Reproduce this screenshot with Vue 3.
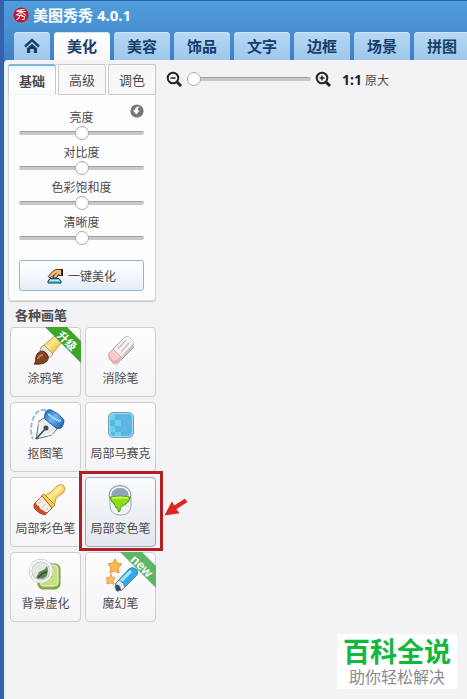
<script setup>
import { ref, reactive } from 'vue'

const tabs = ['美化', '美容', '饰品', '文字', '边框', '场景', '拼图']
const activeTab = ref('美化')

const modes = ['基础', '高级', '调色']
const activeMode = ref('基础')

const sliders = reactive([
  { id: 'brightness', label: '亮度', value: 50 },
  { id: 'contrast', label: '对比度', value: 50 },
  { id: 'saturation', label: '色彩饱和度', value: 50 },
  { id: 'clarity', label: '清晰度', value: 50 },
])

const zoom = ref(0)

const tools = [
  { id: 'paint', label: '涂鸦笔', ribbon: '升级' },
  { id: 'eraser', label: '消除笔' },
  { id: 'cutout', label: '抠图笔' },
  { id: 'mosaic', label: '局部马赛克' },
  { id: 'color', label: '局部彩色笔' },
  { id: 'recolor', label: '局部变色笔', marked: true },
  { id: 'blur', label: '背景虚化' },
  { id: 'magic', label: '魔幻笔', ribbon: 'new' },
]

const resetSliders = () => {
  sliders.forEach((s) => { s.value = 50 })
}
</script>

<template>
  <div class="window">
    <header class="header">
      <div class="title">
        <svg class="logo" viewBox="0 0 16 16" aria-hidden="true">
          <circle cx="8" cy="8" r="7.6" fill="#c5162f" />
          <text x="8" y="12" text-anchor="middle" font-size="11" fill="#fff">秀</text>
        </svg>
        <h1>美图秀秀 4.0.1</h1>
      </div>
      <nav class="tabs">
        <button class="tab home" type="button" aria-label="首页">
          <svg width="16" height="16" viewBox="0 0 16 16" aria-hidden="true">
            <path d="M1 8.5 8 2.2 15 8.5" fill="none" stroke="#173d6d" stroke-width="2.4" />
            <path d="M3 10.2 8 5.8l5 4.4V15H9.8v-4H6.2v4H3z" fill="#173d6d" />
          </svg>
        </button>
        <button
          v-for="tab in tabs"
          :key="tab"
          class="tab"
          :class="{ active: tab === activeTab }"
          type="button"
          @click="activeTab = tab"
        >{{ tab }}</button>
      </nav>
    </header>

    <main class="content">
      <aside class="sidebar">
        <section class="panel">
          <div class="modes">
            <button
              v-for="mode in modes"
              :key="mode"
              class="mode"
              :class="{ active: mode === activeMode }"
              type="button"
              @click="activeMode = mode"
            >{{ mode }}</button>
          </div>
          <div class="adjust">
            <button class="reset" type="button" aria-label="还原" @click="resetSliders">
              <svg width="14" height="14" viewBox="0 0 14 14" aria-hidden="true">
                <circle cx="7" cy="7" r="6.6" fill="#777679" />
                <path d="M9.9 2.6Q5.200 2.200 4.800 6.300H2.900l3.400 4.300 3.300-4.300H7.600Q7.400 4 9.900 2.600z" fill="#fff" />
              </svg>
            </button>
            <div v-for="s in sliders" :key="s.id" class="slider">
              <label :for="s.id">{{ s.label }}</label>
              <input :id="s.id" v-model="s.value" class="range" type="range" min="0" max="100">
            </div>
            <button class="auto" type="button">
              <svg width="16" height="16" viewBox="0 0 16 16" aria-hidden="true">
                <path d="M1 15v-2l2-2.5h9l2 2.5v2z" fill="#55bfe4" stroke="#173c50" />
                <path d="M3 12.3h9" stroke="#d7f6ff" />
                <path d="M1.2 8.5 6 3.2 9 1.5h6v6h-3.5L9.5 9.8H5.8L7 7.2 3 9.8z" fill="#efbd7d" stroke="#5c3b1b" />
                <path d="M7 7.2 9.5 5M9.5 9.5 12 6" stroke="#5c3b1b" fill="none" />
                <path d="M14 1h2v7h-2z" fill="#262320" />
              </svg>
              <span>一键美化</span>
            </button>
          </div>
        </section>

        <h2>各种画笔</h2>
        <div class="tools">
          <div v-for="tool in tools" :key="tool.id" class="cell">
            <button class="tool" :class="{ marked: tool.marked }" type="button">
              <svg class="icon" viewBox="0 0 40 36" aria-hidden="true">
                <defs>
                  <linearGradient :id="`gold-${tool.id}`" x1="0" y1="0" x2="1" y2="1">
                    <stop offset="0" stop-color="#e0a52c" />
                    <stop offset=".45" stop-color="#ffe98e" />
                    <stop offset="1" stop-color="#dd951a" />
                  </linearGradient>
                  <linearGradient :id="`blue-${tool.id}`" x1="0" y1="0" x2="1" y2="1">
                    <stop offset="0" stop-color="#1a62b0" />
                    <stop offset=".45" stop-color="#67b9f5" />
                    <stop offset="1" stop-color="#174f9f" />
                  </linearGradient>
                </defs>

                <g v-if="tool.id === 'paint'" stroke-linejoin="round">
                  <path d="M17 15 31 3q4-2 6 0 3 3 0 7L26 23z" :fill="`url(#gold-${tool.id})`" stroke="#cf9c35" />
                  <path d="M14 19q0-3 4-5l9 9q-2 4-6 4z" fill="#eeeae3" stroke="#a7967e" />
                  <path d="M8 33c3-2 0-7 4-11q4-4 8 0 4 4 1 8-4 4-13 3z" fill="#824225" stroke="#5e2c18" />
                  <path d="M12 28q1-4 5-4" fill="none" stroke="#c27d54" stroke-width="2" />
                </g>

                <g v-else-if="tool.id === 'eraser'" stroke-linejoin="round">
                  <path d="M8 22 24 6q2-1 4 0l4 4q1 2 0 4v3L17 32q-2 2-5 0l-4-5z" fill="#c8c6c7" stroke="#a3a1a2" />
                  <path d="m12 19 12-13q2-1 4 0l5 5q0 1-1 2L20 26z" fill="#f4f3f3" />
                  <path d="m17 18 8-9m-5 12 8-9m-5 12 6-7" stroke="#c6c6c6" stroke-width="1.5" />
                  <path d="m8 22 4-4 8 8-5 4q-1 1-3 0l-4-5z" fill="#f9cbc9" stroke="#dfa3a2" />
                  <path d="m8 25 5 6q2 1 7-4v2l-4 4q-2 1-4-1l-4-4z" fill="#eeb0b0" />
                </g>

                <g v-else-if="tool.id === 'cutout'" stroke-linejoin="round">
                  <path d="M20 4Q10 3 7 13q-4 12 0 20" fill="none" stroke="#9abdda" stroke-width="2" stroke-dasharray="5 2" />
                  <path d="m13 15 8-5 10 13-5 6-16 4z" fill="#e8edf0" stroke="#6a747c" />
                  <path d="m10 33 10-11" stroke="#394650" stroke-width="1.5" />
                  <circle cx="20" cy="22" r="2.5" fill="#404950" />
                  <path d="m14 27-1-11m2 14 12-2" stroke="#fff" />
                  <path d="M19 8q1-5 6-4 9 4 13 10 0 4-2 7-2 3-6 1L19 13q-1-2 0-5z" :fill="`url(#blue-${tool.id})`" stroke="#2558a3" />
                  <path d="M22 8q7 6 13 7" fill="none" stroke="#9dd6fb" stroke-width="2" />
                </g>

                <g v-else-if="tool.id === 'mosaic'">
                  <rect x="7.5" y="6.500" width="25" height="25" rx="5" fill="#75cce9" stroke="#6e9db3" />
                  <path d="M14 8h6v6h-6zm12 0h4l1 6h-5zM9 14h5v6H9zm11 0h6v6h-6zm-6 6h6v6h-6zm12 0h5v6h-5zM9 26h5v4h-3zm11 0h6v4h-6z" fill="#4fbbe0" />
                  <path d="M20 8h6v6h-6zm6 6h5v6h-5zm-6 6h6v6h-6zm6 6h5l-2 4h-3z" fill="#69b2e8" />
                  <rect x="8.5" y="7.5" width="23" height="23" rx="4" fill="none" stroke="#b5eafa" stroke-opacity=".6" />
                </g>

                <g v-else-if="tool.id === 'color'" stroke-linejoin="round">
                  <path d="m20 14 5-3 6-6q4-3 7 0 2 4-1 7l-7 5-1 5-4 4-9-9z" :fill="`url(#gold-${tool.id})`" stroke="#cfa02b" />
                  <path d="M27 13q4-3 8-6" stroke="#fff2a1" stroke-width="2" />
                  <path d="m15 15 3-2 11 11-3 3z" fill="#f5cc45" stroke="#b78626" />
                  <path d="m8 23 8-8 10 12-7 7q-6-1-11-7z" fill="#f5eee9" stroke="#a1603c" />
                  <path d="m8 23 2-2q0 4 3 4 1 4 4 4 2 3 5 2l-3 3q-7-1-11-7z" fill="#c74d2a" />
                  <path d="m15 19-2 4m6 0-3 4m6 0-2 3" stroke="#e4b7a0" />
                </g>

                <g v-else-if="tool.id === 'recolor'" stroke-linejoin="round">
                  <rect x="9" y="8" width="21" height="26" rx="9" fill="#eef3f8" stroke="#9aabbc" />
                  <ellipse cx="19" cy="14" rx="11" ry="9.500" fill="#a7bccd" stroke="#8499ad" />
                  <ellipse cx="19" cy="14" rx="9.500" ry="8" fill="#8ea5b8" stroke="#f7fbff" stroke-width="1.5" />
                  <path d="M9 16q10-2 20 0-1 7-8 9-2 1-2 5-1 2-2 0v-3h-2l-1-3q-4-3-5-8z" fill="#8bdc19" stroke="#5d9d17" />
                  <path d="M11 17q8-1 16 0" fill="none" stroke="#ccf45c" stroke-width="2" />
                </g>

                <g v-else-if="tool.id === 'blur'">
                  <rect x="12" y="8" width="22" height="25" rx="5" fill="#89b342" stroke="#7a9a4b" />
                  <rect x="14" y="9" width="18" height="21" rx="4" fill="#c8df82" stroke="#f2f8d6" />
                  <circle cx="15" cy="15" r="10.500" fill="#e3e8e3" stroke="#a9abaa" stroke-width="3" />
                  <circle cx="15" cy="15" r="10.500" fill="none" stroke="#fff" stroke-width="2" />
                  <path d="m10 22 3-6 6-3 2-3 1 4-1 6-4 3z" fill="#668950" />
                  <path d="m12 22 5-5 4-1" fill="none" stroke="#365d38" stroke-width="2" />
                </g>

                <g v-else stroke-linejoin="round">
                  <path d="m14 3 2 4 5 1-4 4 1 5-5-2-4 2 1-5-3-4 5-1z" fill="#ffb94f" stroke="#e3973d" />
                  <path d="m10 18 1 3 3 1-2 3 1 3-4-1-3 1v-4l-1-2 4-1z" fill="#fdbd5a" stroke="#e9a54f" />
                  <path d="m15 27 13-14q4-3 8 1 2 3-1 6L21 34l-5 1q-3-3-1-8z" fill="#35a9e5" stroke="#2a84bd" />
                  <path d="m18 27 12-12" stroke="#a5eaff" stroke-width="3" />
                  <path d="m15 27 3-3q5 2 6 7l-3 3-5 1q-3-3-1-8z" fill="#e5eef5" stroke="#637690" />
                  <path d="M15 29q4-1 5 5l-4 1q-2-2-1-6z" fill="#344c6c" />
                </g>
              </svg>
              <span>{{ tool.label }}</span>
            </button>
            <svg v-if="tool.ribbon" class="ribbon" :class="tool.id" viewBox="0 0 36 36" aria-hidden="true">
              <path d="M0 0h22l14 14v22z" />
              <text x="22" y="14" dominant-baseline="central" text-anchor="middle" transform="rotate(45 22 14)">{{ tool.ribbon }}</text>
            </svg>
            <template v-if="tool.marked">
              <div class="frame"></div>
              <svg class="arrow" viewBox="0 0 24 20" aria-hidden="true">
                <path d="M1 18 8 5l2 4 11-7 2 3-11 7 3 4z" fill="#e6231e" stroke="#b81d19" stroke-width=".6" />
              </svg>
            </template>
          </div>
        </div>
      </aside>

      <section class="canvas">
        <div class="zoombar">
          <button class="plain" type="button" aria-label="缩小">
            <svg width="17" height="17" viewBox="0 0 17 17" fill="none" stroke="#252326" aria-hidden="true">
              <circle cx="7" cy="7" r="5.3" stroke-width="2" />
              <path d="M4.5 7h5" stroke-width="1.5" />
              <path d="m11 11 4 4" stroke-width="3" />
            </svg>
          </button>
          <input v-model="zoom" class="range" type="range" min="0" max="100" aria-label="缩放">
          <button class="plain" type="button" aria-label="放大">
            <svg width="17" height="17" viewBox="0 0 17 17" fill="none" stroke="#252326" aria-hidden="true">
              <circle cx="7" cy="7" r="5.3" stroke-width="2" />
              <path d="M4.5 7h5M7 4.5v5" stroke-width="1.5" />
              <path d="m11 11 4 4" stroke-width="3" />
            </svg>
          </button>
          <button class="plain actual" type="button"><b>1:1</b> 原大</button>
        </div>
      </section>
    </main>

    <div class="watermark">
      <strong>百科全说</strong>
      <span>助你轻松解决</span>
    </div>
  </div>
</template>

<style>
body {
  background: #3562aa;
}
</style>

<style scoped>
.window {
  display: flex;
  flex-direction: column;
  box-sizing: border-box;
  min-height: 100vh;
  overflow: hidden;
  border-left: 4px solid #3562aa;
  background: linear-gradient(#519fdc, #3f80c7 60px);
  color: #4c4b4e;
  font-family: "Noto Sans", "Noto Sans CJK SC", sans-serif;
  font-size: 12px;
}

button {
  margin: 0;
  padding: 0;
  font: inherit;
  color: inherit;
}

/* --- Title bar and main tabs --- */
.header {
  border-top: 1px solid #2864ac;
}

.title {
  display: flex;
  align-items: center;
  gap: 4px;
  height: 27px;
  padding-left: 9px;
}

.logo {
  width: 16px;
  height: 16px;
}

h1 {
  margin: 0;
  color: #fff;
  font-size: 15px;
  font-weight: 700;
  line-height: 20px;
  white-space: pre;
}

.tabs {
  display: flex;
  gap: 4px;
  padding: 4px 0 0 10px;
}

.tab {
  flex: 0 0 56px;
  height: 28px;
  border: 0;
  border-radius: 4px 4px 0 0;
  background: linear-gradient(#b7d9f5, #9fc6e9);
  box-shadow: inset 0 1px #cfe7fa;
  color: #173d6d;
  font-size: 15px;
  font-weight: 700;
  line-height: 26px;
}

.tab.home {
  display: flex;
  flex-basis: 36px;
  align-items: center;
  justify-content: center;
}

.tab.active {
  background: linear-gradient(#fff, #f7f8fb);
}

/* --- Body --- */
.content {
  display: flex;
  flex: 1;
  padding: 4px 0 0 3px;
  border-left: 1px solid #d9edfa;
  border-radius: 4px 0 0 0;
  background: #f3f2f5;
}

.sidebar {
  flex: 0 0 148px;
}

.panel {
  border-radius: 0 0 4px 4px;
  background: #fdfdfe;
  box-shadow: inset 0 0 0 1px #dad9dc, 0 1px 1px #c8c7ca;
}

.modes {
  display: flex;
  gap: 2px;
}

.mode {
  flex: 1;
  height: 31px;
  border: 1px solid #c9c8cb;
  border-radius: 3px 3px 0 0;
  background: #f8f8f9;
  font-size: 13px;
}

.mode.active {
  border-top: 2px solid #83b5db;
  border-bottom-color: transparent;
  background: linear-gradient(#e9f3fa, #fdfdfe 8px);
  font-weight: 700;
}

.adjust {
  position: relative;
  display: flex;
  flex-direction: column;
  gap: 5px;
  padding: 15px 12px 10px 11px;
}

.reset {
  position: absolute;
  top: 9px;
  right: 12px;
  width: 14px;
  height: 14px;
  border: 0;
  background: none;
}

.reset svg,
.plain svg {
  display: block;
}

.slider {
  display: flex;
  flex-direction: column;
}

.slider label {
  line-height: 16px;
  text-align: center;
}

.range {
  width: 100%;
  height: 14px;
  margin: 0;
  appearance: none;
  background: none;
}

.range::-webkit-slider-runnable-track {
  height: 4px;
  border-radius: 2px;
  background: linear-gradient(#a09fa1 1px, #c8c7c9 1px);
}

.range::-webkit-slider-thumb {
  width: 14px;
  height: 14px;
  margin-top: -5px;
  appearance: none;
  box-sizing: border-box;
  border: 1px solid #aaa9ac;
  border-radius: 50%;
  background: #fff;
}

.auto {
  display: flex;
  align-items: center;
  justify-content: center;
  gap: 5px;
  height: 31px;
  margin-top: 10px;
  border: 1px solid #92b7ce;
  border-radius: 3px;
  background: linear-gradient(#fff, #f4f8fc 50%, #e4eef6);
}

h2 {
  margin: 5px 0 3px;
  padding-left: 7px;
  font-size: 13px;
  line-height: 18px;
}

.tools {
  display: grid;
  grid-template-columns: 1fr 1fr;
  gap: 5px 4px;
  padding-left: 2px;
}

.cell {
  position: relative;
}

.tool {
  display: flex;
  flex-direction: column;
  align-items: center;
  gap: 4px;
  width: 100%;
  height: 70px;
  padding-top: 3px;
  border: 1px solid #cfced1;
  border-radius: 4px;
  background: linear-gradient(#fdfdfe, #f5f4f7);
}

.tool span {
  line-height: 16px;
  white-space: nowrap;
}

.tool.marked {
  border-color: #96a9bf;
  background: linear-gradient(#fafbfd, #e3e7ee);
}

.icon {
  width: 40px;
  height: 36px;
}

.ribbon {
  position: absolute;
  top: 0;
  right: 0;
  width: 36px;
  height: 36px;
  fill: #3ba52c;
}

.ribbon text {
  fill: #fff;
  font-family: "Liberation Sans", "Noto Sans CJK SC", sans-serif;
  font-size: 11px;
  font-weight: 700;
}

.ribbon.magic {
  fill: #5cb765;
}

.ribbon.magic text {
  font-size: 13px;
}

.frame {
  position: absolute;
  z-index: 1;
  inset: -6px -7px -4px -6px;
  border: 3px solid #b11f25;
  pointer-events: none;
}

.arrow {
  position: absolute;
  top: 20px;
  left: 100%;
  width: 24px;
  height: 20px;
  margin-left: 8px;
}

/* --- Canvas --- */
.canvas {
  flex: 1;
  min-width: 0;
}

.zoombar {
  display: flex;
  align-items: center;
  gap: 4px;
  height: 30px;
  padding-left: 10px;
}

.zoombar .range {
  flex: 0 0 124px;
}

.plain {
  border: 0;
  background: none;
}

.actual {
  margin-left: 6px;
}

.actual b {
  color: #252326;
  font-size: 14px;
}

.watermark {
  position: fixed;
  right: 10px;
  bottom: 10px;
  display: flex;
  flex-direction: column;
  align-items: center;
  box-sizing: border-box;
  width: 120px;
  height: 55px;
  padding-top: 3px;
  background: #fff;
  font-family: "Liberation Sans", "Noto Sans CJK SC", sans-serif;
}

.watermark strong {
  color: #12b83d;
  font-size: 27px;
  line-height: 32px;
}

.watermark span {
  color: #8b8b8b;
  font-size: 16px;
  line-height: 18px;
}
</style>
